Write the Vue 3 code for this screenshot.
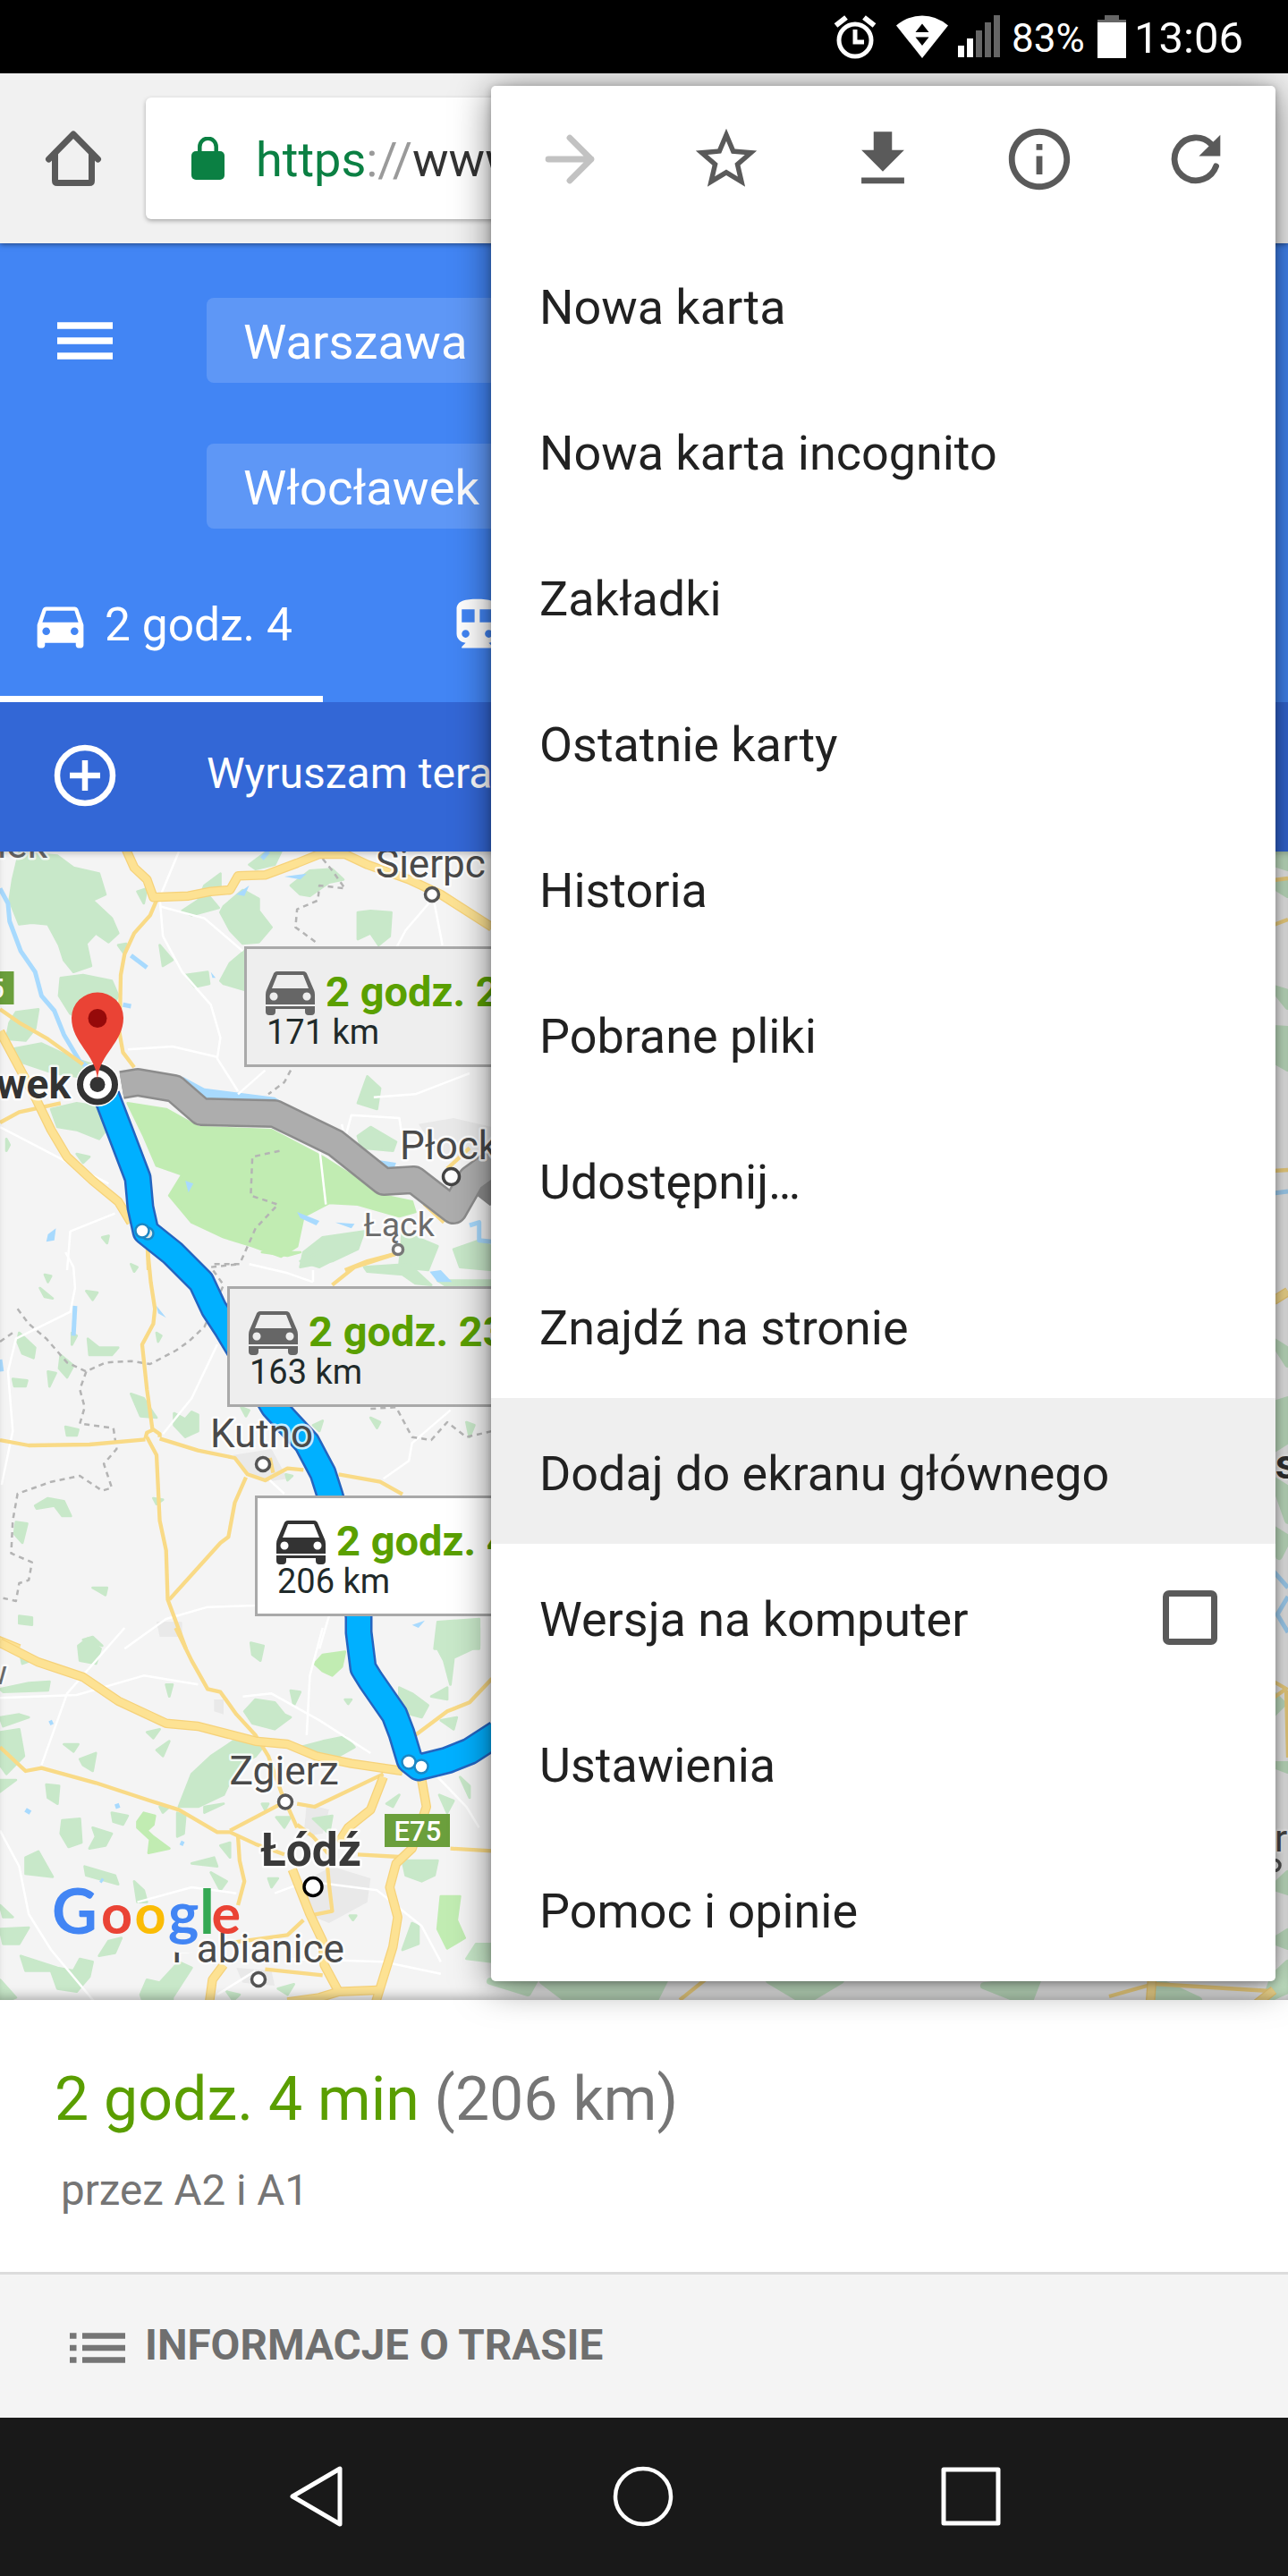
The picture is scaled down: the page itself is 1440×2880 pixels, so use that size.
<template>
  <div class="screen">
    <!-- Status bar -->
    <div class="status-bar">
      <svg class="alarm" viewBox="0 0 48 50" width="48" height="50">
        <circle cx="24" cy="29" r="18" fill="none" stroke="#fff" stroke-width="5" />
        <path d="M24 17v14h10" fill="none" stroke="#fff" stroke-width="5" />
        <path d="M2.500 12.500L14 3.500M45.500 12.500L34 3.500" stroke="#fff" stroke-width="6" />
      </svg>
      <svg class="wifi" viewBox="0 0 58 48" width="58" height="48">
        <path d="M0 11.500Q13 .5 29 .5T58 11.500L29 48z" fill="#fff" />
        <path d="M21.500 19L29 9.500 36.500 19zM21.500 24.500L29 34 36.500 24.500z" fill="#000" />
      </svg>
      <div class="signal">
        <span
          v-for="(bar, index) in signalBars"
          :key="index"
          :class="{ on: bar.on }"
          :style="{ height: bar.height + 'px' }"
        ></span>
      </div>
      <span class="percent">83%</span>
      <svg class="battery" viewBox="0 0 32 48" width="32" height="48">
        <path d="M8 0h16v5h8v4H0V5h8z" fill="#666" />
        <path d="M0 8h32v40H0z" fill="#fff" />
      </svg>
      <span class="clock">13:06</span>
    </div>

    <!-- Browser toolbar -->
    <div class="toolbar">
      <svg class="home" viewBox="0 0 64 64" width="64" height="64">
        <g fill="none" stroke="#5a5a5a" stroke-width="7" stroke-linecap="round" stroke-linejoin="round">
          <path d="M4.500 33L32 5l27.500 28" />
          <path d="M11.500 27v30q0 2.500 2.500 2.500h36q2.500 0 2.500-2.500V27" />
        </g>
      </svg>
      <div class="omnibox">
        <svg viewBox="0 0 37 48" width="37" height="48">
          <rect y="16" width="37" height="32" rx="5" fill="#0b8043" />
          <path d="M9.300 18v-7a9.200 9.200 0 0 1 18.400 0v7" fill="none" stroke="#0b8043" stroke-width="4.500" />
        </svg>
        <div class="url"><span class="scheme">https</span><span class="sep">://</span>www.google.pl</div>
      </div>
    </div>

    <!-- Directions header -->
    <div class="directions">
      <div class="waypoint">
        <svg class="burger" viewBox="0 0 62 42" width="62" height="42">
          <path d="M0 4h62M0 21h62M0 38h62" stroke="#fff" stroke-width="7.500" />
        </svg>
        <div class="field">Warszawa</div>
      </div>
      <div class="waypoint">
        <div class="field">Włocławek</div>
      </div>
      <div class="modes">
        <div class="mode active">
          <svg viewBox="0 0 24 24" width="69" height="69"><path :d="carPath" fill="#fff" /></svg>
          <span>2 godz. 4</span>
        </div>
        <div class="mode transit">
          <svg viewBox="0 0 24 24" width="69" height="69"><path :d="trainPath" fill="#fff" /></svg>
        </div>
      </div>
    </div>
    <div class="departure">
      <svg viewBox="0 0 70 70" width="70" height="70">
        <circle cx="35" cy="35" r="31" fill="none" stroke="#fff" stroke-width="6.500" />
        <path d="M35 18v34M18 35h34" stroke="#fff" stroke-width="6.500" />
      </svg>
      <span>Wyruszam teraz</span>
    </div>

    <!-- Map -->
    <div class="map">
      <svg viewBox="0 952 1440 1284" width="1440" height="1284">
        <g v-for="(tile, index) in tiles" :key="index" :transform="tile.transform">
          <polygon v-for="p in tile.urban" :key="p" :points="p" class="urban" />
          <polygon v-for="p in tile.woods" :key="p" :points="p" class="woods" />
          <polygon v-for="p in tile.parks" :key="p" :points="p" class="park" />
          <polygon v-for="p in tile.lakes" :key="p" :points="p" class="lake" />
          <polyline v-for="p in tile.rivers" :key="p" :points="p" class="river" />
          <polyline v-for="p in tile.streets" :key="p" :points="p" class="street" />
          <polyline v-for="p in tile.borders" :key="p" :points="p" class="border" />
          <polyline v-for="p in tile.minor" :key="p" :points="p" class="minor" />
          <polyline v-for="p in tile.major" :key="p" :points="p" class="major-edge" />
          <polyline v-for="p in tile.major" :key="p + 'in'" :points="p" class="major" />
        </g>

        <!-- Alternative and selected routes -->
        <g class="route">
          <polyline :points="altRoute" stroke="#8c8c8c" stroke-width="32" />
          <polyline points="529,1317 556,1338" stroke="#8c8c8c" stroke-width="26" />
          <polyline :points="altRoute" stroke="#adadad" stroke-width="27" />
          <polyline :points="mainRoute" stroke="#2465c0" stroke-width="31" />
          <polyline :points="mainRoute" stroke="#00b0ff" stroke-width="26" />
        </g>
        <g fill="#fff" stroke="#1b87c5" stroke-width="2.500">
          <circle cx="165" cy="1379" r="6.500" fill="#dfe8e8" />
          <circle cx="159" cy="1376" r="7.500" />
          <circle cx="471" cy="1975" r="7.500" />
          <circle cx="457" cy="1970" r="7.500" />
        </g>

        <!-- Place names -->
        <template v-for="place in places" :key="place.name">
          <text
            :x="place.x"
            :y="place.y"
            :font-size="place.size"
            :font-weight="place.weight || 400"
            :text-anchor="place.anchor || 'start'"
            :fill="place.color || '#4a4a4a'"
            class="place"
          >{{ place.name }}</text>
          <circle
            v-if="place.dot"
            :cx="place.dot[0]"
            :cy="place.dot[1]"
            :r="place.dot[2]"
            :stroke="place.dot[3] || '#555'"
            fill="#fff"
            stroke-width="3.500"
          />
        </template>
        <g class="shield">
          <rect x="430" y="2028" width="73" height="37" />
          <text x="467" y="2058" text-anchor="middle">E75</text>
          <rect x="-50" y="1086" width="65.500" height="37" />
          <text x="5" y="1116" text-anchor="end">75</text>
        </g>

        <!-- Destination -->
        <circle cx="109" cy="1212.500" r="24.500" fill="#fff" />
        <circle cx="109" cy="1212.500" r="19.500" fill="#fff" stroke="#333" stroke-width="7" />
        <circle cx="109" cy="1212.500" r="8.500" fill="#333" />
        <path d="M109 1207C107 1178 80 1166 80 1138a29 28.500 0 0 1 58 0C138 1166 111 1178 109 1207z" fill="#ea4335" />
        <circle cx="109" cy="1138.500" r="10.500" fill="#960a0a" />

        <!-- Google logo -->
        <rect x="188" y="2156" width="34" height="27" rx="10" fill="#f4f4f4" />
        <text class="logo" y="2162">
          <tspan
            v-for="(letter, index) in logo"
            :key="index"
            :x="letter.x"
            :fill="letter.color"
            :font-size="letter.size"
          >{{ letter.char }}</tspan>
        </text>
      </svg>

      <div
        v-for="callout in callouts"
        :key="callout.distance"
        class="callout"
        :class="{ selected: callout.selected }"
        :style="{ left: callout.x + 'px', top: callout.y + 'px' }"
      >
        <div class="callout-top">
          <svg viewBox="0 0 55 49" width="55" height="49">
            <path
              fill-rule="evenodd"
              d="M8.500 3.500Q9.500 0 13 0h29q3.500 0 4.500 3.500L54 21q1 2 1 5v11H0V26q0-3 1-5zM13 4L7 19h41L42 4zM9 23.500a4.500 4.500 0 1 0 .01 0zM46 23.500a4.500 4.500 0 1 0 .01 0zM0 39h55v6q0 4-4 4h-3q-4 0-4-4v-3H11v3q0 4-4 4H4q-4 0-4-4z"
            />
          </svg>
          <span class="duration">{{ callout.duration }}</span>
        </div>
        <div class="distance">{{ callout.distance }}</div>
      </div>
    </div>

    <!-- Route summary -->
    <div class="summary">
      <div class="headline"><span class="time">2 godz. 4 min</span> (206 km)</div>
      <div class="via">przez A2 i A1</div>
    </div>
    <div class="details">
      <svg viewBox="0 0 62 36" width="62" height="36">
        <path
          d="M0 4.500h7.500M0 18h7.500M0 31.500h7.500M14 4.500h48M14 18h48M14 31.500h48"
          stroke="#757575"
          stroke-width="6.500"
        />
      </svg>
      <span>INFORMACJE O TRASIE</span>
    </div>

    <!-- System navigation -->
    <div class="nav-bar">
      <svg viewBox="0 0 366 80" width="366" height="80">
        <path d="M210 9v62l-53-31z" fill="none" stroke="#fff" stroke-width="5" stroke-linejoin="round" />
      </svg>
      <svg viewBox="0 0 366 80" width="366" height="80">
        <circle cx="183" cy="40" r="31" fill="none" stroke="#fff" stroke-width="4.500" />
      </svg>
      <svg viewBox="0 0 366 80" width="366" height="80">
        <rect x="153" y="10" width="61" height="60" fill="none" stroke="#fff" stroke-width="5" stroke-linejoin="round" />
      </svg>
    </div>

    <!-- Browser menu -->
    <div class="menu">
      <div class="menu-actions">
        <div class="action">
          <svg viewBox="0 0 24 24" width="82" height="82">
            <path
              d="M5 12h14M12 5l7 7-7 7"
              fill="none"
              stroke="#c2c2c2"
              stroke-width="2"
              stroke-linecap="round"
              stroke-linejoin="round"
            />
          </svg>
        </div>
        <div v-for="(icon, index) in actionIcons" :key="index" class="action">
          <svg viewBox="0 0 24 24" width="82" height="82"><path :d="icon" fill="#5a5a5a" /></svg>
        </div>
        <div class="action">
          <svg viewBox="0 0 24 24" width="82" height="82">
            <path d="M17 7.050A7 7 0 1 0 18.600 14.300" fill="none" stroke="#5a5a5a" stroke-width="2" stroke-linecap="round" />
            <path d="M20 4v7h-7z" fill="#5a5a5a" />
          </svg>
        </div>
      </div>
      <div
        v-for="item in menuItems"
        :key="item.label"
        class="menu-item"
        :class="{ pressed: item.pressed }"
      >
        <span>{{ item.label }}</span>
        <span v-if="item.checkbox" class="checkbox"></span>
      </div>
    </div>
  </div>
</template>

<script setup>
const signalBars = [
  { height: 13, on: true },
  { height: 21, on: true },
  { height: 30, on: false },
  { height: 39, on: false },
  { height: 47, on: false }
]

const menuItems = [
  { label: 'Nowa karta' },
  { label: 'Nowa karta incognito' },
  { label: 'Zakładki' },
  { label: 'Ostatnie karty' },
  { label: 'Historia' },
  { label: 'Pobrane pliki' },
  { label: 'Udostępnij…' },
  { label: 'Znajdź na stronie' },
  { label: 'Dodaj do ekranu głównego', pressed: true },
  { label: 'Wersja na komputer', checkbox: true },
  { label: 'Ustawienia' },
  { label: 'Pomoc i opinie' }
]

const carPath = 'M18.920 6.010C18.720 5.420 18.160 5 17.500 5h-11c-.66 0-1.210.42-1.420 1.010L3 12v8c0 .55.45 1 1 1h1c.55 0 1-.45 1-1v-1h12v1c0 .55.45 1 1 1h1c.55 0 1-.45 1-1v-8l-2.080-5.990zM6.500 16c-.83 0-1.500-.67-1.500-1.500S5.670 13 6.500 13s1.500.67 1.500 1.500S7.330 16 6.500 16zm11 0c-.83 0-1.500-.67-1.500-1.500s.67-1.500 1.500-1.500 1.500.67 1.500 1.500-.67 1.500-1.500 1.500zM5 11l1.500-4.500h11L19 11H5z'
const trainPath = 'M12 2c-4.420 0-8 .5-8 4v9.500C4 17.430 5.570 19 7.500 19L6 20.500v.5h12v-.5L16.500 19c1.930 0 3.500-1.570 3.500-3.500V6c0-3.500-3.580-4-8-4zM7.500 17c-.83 0-1.500-.67-1.500-1.500S6.670 14 7.500 14s1.500.67 1.500 1.500S8.330 17 7.500 17zm3.500-6H6V6h5v5zm5.500 6c-.83 0-1.500-.67-1.500-1.500s.67-1.500 1.500-1.500 1.500.67 1.500 1.500-.67 1.500-1.500 1.500zm1.500-6h-5V6h5v5z'

// star, download, info
const actionIcons = [
  'M22 9.240l-7.190-.62L12 2 9.190 8.630 2 9.240l5.460 4.730L5.820 21 12 17.270 18.180 21l-1.630-7.030L22 9.240zM12 15.400l-3.760 2.270 1-4.280-3.320-2.880 4.380-.38L12 6.100l1.710 4.040 4.380.38-3.320 2.880 1 4.280L12 15.400z',
  'M19 9h-4V3H9v6H5l7 7 7-7zM5 18v2h14v-2H5z',
  'M11 17h2v-6h-2v6zm1-15C6.480 2 2 6.480 2 12s4.480 10 10 10 10-4.480 10-10S17.520 2 12 2zm0 18c-4.410 0-8-3.590-8-8s3.590-8 8-8 8 3.590 8 8-3.590 8-8 8zM11 9h2V7h-2v2z'
]

const callouts = [
  { x: 273, y: 1058 - 952, duration: '2 godz. 2', distance: '171 km' },
  { x: 254, y: 1438 - 952, duration: '2 godz. 23', distance: '163 km' },
  { x: 285, y: 1672 - 952, duration: '2 godz. 4', distance: '206 km', selected: true }
]

const logo = [
  { char: 'G', x: 58, color: '#4285f4', size: 70 },
  { char: 'o', x: 113, color: '#ea4335', size: 61 },
  { char: 'o', x: 150.5, color: '#fbbc05', size: 61 },
  { char: 'g', x: 188, color: '#4285f4', size: 65 },
  { char: 'l', x: 223, color: '#34a853', size: 68 },
  { char: 'e', x: 236.5, color: '#ea4335', size: 61 }
]

const places = [
  { name: 'Lubraniek', x: 53, y: 959, size: 44, anchor: 'end', color: '#666' },
  { name: 'Sierpc', x: 420, y: 980.5, size: 44, dot: [483, 1000, 7.5] },
  { name: 'Włocławek', x: 79, y: 1227.5, size: 46, weight: 700, anchor: 'end', color: '#333' },
  { name: 'Płock', x: 447, y: 1295.5, size: 44, dot: [504.5, 1315.5, 9, '#444'] },
  { name: 'Łąck', x: 406.5, y: 1381.5, size: 37.5, color: '#6b6b6b', dot: [445, 1397, 5.5, '#777'] },
  { name: 'Kutno', x: 235, y: 1618, size: 44, dot: [294, 1637, 7.5] },
  { name: 'w', x: 8, y: 1883, size: 37, anchor: 'end', color: '#6b6b6b' },
  { name: 'Zgierz', x: 256.5, y: 1995, size: 44.3, dot: [319, 2014.5, 7.5] },
  { name: 'Łódź', x: 291, y: 2085.5, size: 51.5, weight: 700, color: '#3a3a3a', dot: [350, 2109.5, 10, '#000'] },
  { name: 'Pabianice', x: 192, y: 2194, size: 44.2, dot: [289, 2213, 7.5] },
  { name: 's', x: 1426, y: 1652.5, size: 46, weight: 700, color: '#333' },
  { name: 'r', x: 1425, y: 2069.5, size: 42, dot: [1425, 2085.5, 6] }
]

const altRoute = '136,1213 154,1210 195,1217 225,1243 307,1245 375,1278 429,1321 463,1319 507,1353 527,1318 545,1305 570,1303'
const mainRoute = '119,1225 154,1317 157,1350 163,1377 193,1401 225,1433 239,1463 254,1486 306,1573 343,1613 361,1647 369,1672 388,1740 401,1807 401,1825 406,1865 414,1878 441,1917 449,1938 458,1968 468,1976 500,1968 525,1958 556,1938'

const tiles = [
  {
    transform: 'translate(0 940) scale(.35714 .33333)',
    urban: ['1310,950 1420,930 1540,960 1540,1060 1380,1060'],
    woods: [
      '60,40 180,50 230,90 310,110 330,180 290,200 350,260 370,310 340,340 300,310 270,345 285,420 230,440 200,400 185,350 150,280 100,275 60,280 30,200 40,130',
      '190,460 260,450 350,470 370,520 340,580 260,600 220,580 185,520',
      '50,575 120,565 110,630 80,670 20,665 30,610',
      '30,700 130,680 230,730 290,750 300,800 170,780 60,740',
      '160,900 240,880 300,890 340,960 310,1000 240,970 180,960',
      '640,150 690,110 690,165 650,180 685,225 600,250 570,235 620,200',
      '700,220 760,165 810,195 810,235 850,290 810,340 760,345 720,300 690,240',
      '910,150 970,100 1040,95 1075,130 1030,140 970,185 940,180',
      '1120,240 1160,235 1225,240 1220,320 1185,350 1160,310 1120,330',
      '580,450 650,440 655,480 610,490',
      '690,470 720,410 765,370 765,500 700,480',
      '1120,880 1150,790 1190,830 1180,900',
      '1120,990 1160,960 1240,1010 1230,1040 1130,1030',
      '500,350 540,400 510,420',
      '1010,1330 1140,1310 1120,1370 1040,1410 940,1430 950,1380',
      '1260,1310 1370,1360 1340,1440 1250,1430',
      '1420,1370 1500,1340 1540,1360 1540,1440 1440,1430',
      '240,1050 280,1060 260,1080', '320,1330 340,1325 335,1350', '430,170 460,160 450,210',
      '780,80 830,40 880,36 860,80 800,95', '370,350 395,345 390,380', '20,1000 30,1020 20,1040'
    ],
    parks: [
      '400,880 520,900 620,960 850,970 1010,1060 1200,1190 1290,1210 1300,1245 1250,1260 1120,1220 1030,1215 950,1260 930,1360 880,1395 790,1360 700,1330 600,1280 530,1190 570,1120 490,1090 450,990'
    ],
    lakes: [
      '570,790 640,830 860,860 960,930 850,890 640,870',
      '1180,1070 1240,1080 1230,1110', '740,180 780,150 765,185', '580,1140 605,1150 590,1180',
      '930,1245 1000,1275 990,1290 940,1265', '1050,1280 1110,1285 1100,1300', '150,1320 175,1300 170,1340 145,1345',
      '890,120 960,110 940,130', '660,440 675,460 665,460'
    ],
    rivers: [
      '0,160 25,210 30,270 65,370 110,440 130,520 170,570 200,650 250,740 330,800',
      '410,385 460,425', '385,550 410,555', '1470,1290 1500,1280 1500,1340 1540,1345', '820,60 840,36'
    ],
    streets: [
      '560,36 500,190 510,320 570,440 660,550 690,660 680,730 745,840', '500,220 640,260 760,370',
      '400,700 540,690 680,725', '1350,200 1270,300 1240,360', '1360,210 1385,350', '0,960 340,1150',
      '1000,1030 1020,1220', '360,1250 220,1310 210,1440', '1070,950 1080,1000 1100,920 1250,930 1260,1000',
      '1170,860 1300,850 1470,780', '745,850 830,770'
    ],
    borders: [
      '1010,60 1040,100 1080,160 1000,150 995,200 930,230 925,290 995,345', '910,770 890,810 840,850',
      '875,1040 790,1060 785,1190 870,1220 800,1300 750,1420 660,1420'
    ],
    minor: [
      '490,200 470,250 420,310 390,380 378,450 376,560 370,620 385,710 420,760',
      '0,565 60,610 150,665 260,750', '0,945 60,910 190,880', '460,1330 465,1440',
      '1080,1440 1150,1410 1240,1385', '1340,1200 1330,1220 1390,1280', '1400,1100 1470,1030'
    ],
    major: [
      '395,30 420,90 460,130 480,190 590,185 660,170 720,165 745,118 830,115 930,75 1000,45 1080,45 1150,80 1280,130 1380,180 1540,290',
      '0,640 40,720 110,860 160,970 210,1060 290,1140 370,1210 410,1280'
    ]
  },
  {
    transform: 'translate(0 1400) scale(.35714 .33333)',
    urban: ['730,680 850,660 900,760 830,770 780,740', '490,1240 570,1240 570,1290 500,1290'],
    woods: [
      '60,270 110,320 105,355 70,340 55,300', '190,345 230,380 210,420 185,390', '275,290 310,320 370,320 350,345 280,345',
      '545,540 580,560 600,535 620,545 620,600 580,620 545,580', '410,475 450,490 480,540 490,555 440,550',
      '110,850 150,825 200,835 222,885 195,885 170,850 115,860', '50,905 85,910 70,975 45,945', '290,1125 335,1125 330,1150',
      '60,1220 100,1225 100,1250 60,1245', '205,585 245,595 240,615 210,615', '1370,1240 1500,1230 1500,1330 1360,1330',
      '270,130 305,135 290,160', '940,30 1000,0 1090,0 1000,50', '1140,50 1280,40 1350,110 1300,105 1260,75 1150,65',
      '1370,95 1540,95 1540,115 1400,115', '125,120 165,155 140,150', '40,425 85,430 80,450 45,450', '150,400 175,405 155,450',
      '1160,555 1190,570 1180,590', '1460,570 1485,580 1470,620', '260,1300 290,1290 320,1320', '410,40 430,50 420,65',
      '140,75 160,80 150,100', '490,270 505,280 495,300', '755,520 780,530 770,550', '980,580 1010,565 1000,600',
      '225,270 240,280 225,310', '480,825 510,830 490,845', '1480,0 1500,0 1515,40', '895,745 915,750 900,765'
    ],
    parks: ['820,0 940,0 900,12'],
    lakes: ['1345,65 1380,60 1415,100 1370,100', '490,180 520,220 495,205', '1290,1250 1330,1235 1310,1260'],
    rivers: ['235,180 230,280', '0,360 5,400'],
    streets: [
      '205,0 230,50 235,120 220,200 50,290 25,400 40,600 5,780', '680,310 640,400 600,490 510,610',
      '1410,530 1290,640 1280,700 1200,760', '390,1330 520,1230 650,1190 800,1185', '1030,1220 1000,1330',
      '780,40 900,70 980,100', '980,100 980,60', '840,760 890,810'
    ],
    borders: [
      '55,190 90,240 145,290 210,370 270,400 330,370 410,365 470,375 550,330 590,300 640,250 700,110 660,50 750,40',
      '270,400 250,460 265,520 250,575 355,590 365,660 325,710 350,790 320,800 250,750 160,770 55,810 40,900 35,1010 100,1040 90,1100 60,1110 50,1170 10,1160',
      '1160,525 1240,520 1290,620 1350,630 1400,570 1460,620 1540,600', '0,300 40,270'
    ],
    minor: [
      '463,0 472,100 485,190 480,240 445,310 460,460 478,600', '455,625 460,605 480,595 500,610 500,620',
      '460,620 490,680 500,900 520,1000 525,1165 582,1330', '0,630 90,648 280,645 455,628',
      '500,625 620,665 735,690 775,745 830,765 900,725 950,730', '1060,745 1190,770 1260,812',
      '770,755 735,840 715,955 690,975 530,1165', '1040,110 1110,50 1240,5', '845,690 855,740'
    ],
    major: ['-10,1300 60,1330']
  },
  {
    transform: 'translate(0 1820) scale(.35714 .33333)',
    urban: ['930,860 1040,800 1160,840 1150,920 1030,990 960,960', '740,1140 850,1150 860,1200 760,1190', '670,240 700,240 700,290 670,280', '960,590 1030,610 1010,690 950,700'],
    woods: [
      '245,60 275,35 315,70 300,120 250,110', '785,50 825,60 815,110 790,90', '0,350 60,340 75,430 20,490 0,460',
      '0,205 90,185 155,180 150,210 10,215', '765,280 800,240 860,250 890,290 910,300 860,340 790,320', '460,350 500,340 480,370',
      '490,410 530,380 510,430', '560,600 600,490 660,430 730,380 830,390 800,430 740,470 700,560 620,600', '940,400 1010,380 1080,365 1110,400 1060,430 980,420',
      '1370,0 1500,0 1500,60 1420,100 1410,190 1390,110 1365,60', '1250,200 1290,220 1340,260 1320,300 1250,280',
      '195,645 250,640 255,720 215,735 190,690', '290,670 350,690 330,730 280,740 300,700', '145,525 185,530 180,590 150,570',
      '80,770 120,750 165,835 80,825', '265,800 360,830 370,860 270,830', '350,620 400,630 385,660 355,650',
      '1260,780 1370,780 1360,830 1320,850 1270,830', '1460,1110 1490,1060 1540,1060 1540,1120', '1260,1080 1290,990 1310,1000 1310,1060',
      '65,1100 180,1140 230,1150 250,1110 290,1120 280,1170 240,1220 180,1210 160,1150 80,1150', '0,1010 90,1005 60,1060 10,1060', '310,1100 340,1050 380,1040 360,1090',
      '440,1230 460,1180 500,1190 560,1120 600,1140 540,1240 540,1260 450,1260', '600,790 670,770 680,800', '555,620 580,630 575,690 555,700',
      '420,850 450,880 460,920 430,920', '870,1210 920,1195 900,1230', '1375,560 1420,580 1400,620', '200,390 245,390 230,415', '865,635 910,635 890,670',
      '980,640 1040,630 1030,690', '0,1180 50,1240 0,1260', '910,210 940,215 920,260', '1350,230 1400,200 1400,240', '1380,310 1430,300 1420,340',
      '520,190 540,190 530,230', '0,300 60,290 90,300 10,330', '0,510 50,510 0,550', '1440,500 1470,530 1470,570', '65,95 110,105 70,120',
      '840,840 870,840 850,870', '500,600 530,600 510,620', '250,440 300,420 290,480 260,460', '690,730 720,720 720,770', '660,820 710,850 690,880',
      '0,930 40,970 10,970', '1210,590 1250,560 1230,600', '710,1220 750,1230 730,1250', '820,590 840,590 830,610', '1080,240 1100,240 1090,255', '1095,965 1115,965 1105,980', '640,600 700,590 640,620'
    ],
    parks: [
      '985,120 1010,90 1080,80 1070,130 1040,160 1010,145', '430,650 450,620 485,630 480,660 460,680 480,700 530,740 465,755 470,710 430,670',
      '1380,900 1440,900 1430,980 1455,1040 1400,1075 1370,1010'
    ],
    lakes: [],
    rivers: ['365,590 370,605', '565,720 575,725', '315,845 322,850', '155,320 165,315', '80,610 95,620'],
    streets: [
      '390,0 210,220 130,460', '0,235 240,225 450,160 620,190', '1010,0 970,160 960,360', '760,230 850,220 1000,310 1160,420', '0,680 60,800 90,960 160,1080 300,1260',
      '430,920 600,870 740,890', '860,890 960,850 1180,880 1320,1000 1380,1120', '1370,500 1460,600 1500,670', '900,1110 1200,1120 1380,1160', '680,1230 800,1150'
    ],
    borders: [],
    minor: [
      '550,0 600,110 650,205 690,215 740,290 800,360 840,430 880,550 930,670', '0,400 80,480 130,470 300,520 470,580 560,610 680,685 720,685 800,725 890,760',
      '720,680 880,590', '930,590 985,600 1200,490', '745,700 750,780 765,850 745,930', '1120,760 1250,768', '1410,740 1540,748',
      '1300,360 1400,280 1470,250 1540,170', '730,1055 900,1030 950,980', '830,1145 1010,1165', '1025,800 1030,860 1040,950 970,965', '930,660 980,700 1030,760'
    ],
    major: [
      '0,50 120,115 260,165 370,245 520,320 620,330 800,380 900,390 990,430 1100,455 1260,480',
      '1320,510 1335,600 1290,740 1240,790 1220,870 1245,970 1230,1070 1175,1260', '1200,500 1160,610 1090,670 1060,720',
      '915,810 970,960 1010,1050 1015,1130 1060,1220 1180,1215', '900,1255 1000,1240 1060,1220', '700,1130 665,1180 655,1260'
    ]
  },
  // strips visible right of and below the menu
  {
    transform: '',
    urban: [],
    woods: [
      '1424,950 1440,952 1440,970 1424,965', '1424,990 1440,985 1440,1000', '1424,1105 1440,1110 1440,1125', '1424,1150 1440,1151 1440,1194 1424,1185',
      '1424,1500 1440,1510 1440,1525', '1424,1570 1440,1565 1440,1610 1424,1620', '1424,1655 1440,1665 1440,1700', '1424,1710 1440,1720 1430,1740',
      '1424,1895 1434,1905 1424,1915', '1424,1973 1440,1973 1440,1979', '1424,2110 1440,2095 1440,2115', '1424,2170 1440,2160 1440,2176',
      '1424,2210 1440,2195 1440,2225 1415,2236', '607,2215 745,2210 730,2240 640,2240', '548,2215 600,2210 590,2228', '860,2214 940,2214 900,2238', '1100,2220 1160,2214 1150,2240', '1295,2215 1340,2236 1295,2236'
    ],
    parks: [],
    lakes: [],
    rivers: ['1424,1757 1440,1775', '1440,1785 1428,1805 1440,1825', '1424,1334 1440,1332'],
    streets: [],
    borders: [],
    minor: ['1424,984 1440,982', '1424,1034 1440,1028', '1424,1309 1440,1308', '1424,1880 1438,1888 1424,1898', '1438,1890 1440,1965', '1240,2232 1290,2218 1420,2226', '760,2236 790,2212'],
    major: ['1424,1454 1440,1444', '1288,2212 1286,2240', '1424,2225 1405,2240']
  }
]
</script>

<style>
body {
  background: #fff;
}
</style>

<style scoped>
.screen {
  position: relative;
  width: 1440px;
  height: 2880px;
  overflow: hidden;
  font-family: Roboto, "Liberation Sans", sans-serif;
  background: #fff;
}

.screen * {
  box-sizing: border-box;
}

.screen svg {
  display: block;
  flex: none;
}

/* Status bar */
.status-bar {
  position: relative;
  z-index: 3;
  display: flex;
  justify-content: flex-end;
  height: 82px;
  padding: 16px 51px 0 0;
  background: #000;
  color: #fff;
}

.wifi {
  margin: 1px 0 0 22px;
}

.signal {
  display: flex;
  align-items: flex-end;
  gap: 3px;
  height: 48px;
  margin-left: 11px;
}

.signal span {
  width: 7px;
  background: #666;
}

.signal span.on {
  background: #fff;
}

.percent {
  width: 96px;
  margin-left: 13px;
  font-size: 44px;
  line-height: 54px;
}

.battery {
  margin-top: 1px;
}

.clock {
  width: 121px;
  margin-left: 9px;
  font-size: 49px;
  line-height: 54px;
}

/* Toolbar */
.toolbar {
  position: relative;
  z-index: 1;
  display: flex;
  height: 190px;
  padding: 27px 0 0 50px;
  background: #f1f1f1;
  box-shadow: 0 1px 6px rgba(0, 0, 0, 0.5);
}

.home {
  margin-top: 36px;
}

.omnibox {
  display: flex;
  align-items: center;
  width: 1100px;
  height: 136px;
  margin-left: 49px;
  padding-left: 51px;
  border-radius: 6px;
  background: #fff;
  box-shadow: 0 2px 5px rgba(0, 0, 0, 0.3);
}

.url {
  margin-left: 35px;
  padding-top: 3px;
  font-size: 54px;
  color: #333;
}

.scheme {
  color: #0b8043;
}

.sep {
  color: #9a9a9a;
}

/* Directions */
.directions {
  height: 513px;
  padding-top: 61px;
  background: #4285f4;
  color: #fff;
}

.waypoint {
  display: flex;
  align-items: center;
  justify-content: flex-end;
  height: 95px;
  margin-bottom: 68px;
}

.burger {
  margin-right: 105px;
}

.field {
  width: 1129px;
  height: 95px;
  margin-right: 80px;
  padding: 4px 0 0 41px;
  border-radius: 8px;
  background: #5e97f6;
  font-size: 54.4px;
  line-height: 92px;
}

.modes {
  display: flex;
  height: 173px;
  margin-top: -47px;
}

.mode {
  display: flex;
  align-items: center;
  width: 361px;
  padding: 6px 0 0 33px;
  border-bottom: 7px solid transparent;
  font-size: 51.5px;
}

.mode.active {
  border-color: #fff;
}

.mode span {
  margin-left: 15px;
  white-space: nowrap;
}

.mode.transit {
  padding-left: 138px;
}

.departure {
  display: flex;
  align-items: center;
  height: 167px;
  padding: 0 0 4px 60px;
  background: #3367d6;
  color: #fff;
  font-size: 48px;
}

.departure span {
  margin-left: 101px;
  padding-bottom: 5px;
}

/* Map */
.map {
  position: relative;
  height: 1284px;
  overflow: hidden;
  background: #f4f4f4;
}

.map::after {
  content: "";
  position: absolute;
  inset: 0;
  box-shadow: inset 0 8px 10px -8px rgba(0, 0, 0, 0.35), inset 0 -10px 14px -8px rgba(0, 0, 0, 0.35);
}

.map polyline {
  fill: none;
  stroke-linejoin: round;
  vector-effect: non-scaling-stroke;
}

.urban {
  fill: #e9e9e9;
}

.woods {
  fill: #c8e8c9;
  stroke: #c8e8c9;
  stroke-width: 8;
  stroke-linejoin: round;
}

.park {
  fill: #c1ecb2;
  stroke: #c1ecb2;
  stroke-width: 8;
  stroke-linejoin: round;
}

.lake {
  fill: #a8dafe;
}

.river {
  stroke: #a8dafe;
  stroke-width: 5;
}

.street {
  stroke: #fff;
  stroke-width: 2.5;
}

.border {
  stroke: #b4b4b4;
  stroke-width: 2.5;
  stroke-dasharray: 6 5;
}

.minor {
  stroke: #f9da86;
  stroke-width: 4.3;
}

.major-edge {
  stroke: #f6d27a;
  stroke-width: 10.5;
}

.major {
  stroke: #fde293;
  stroke-width: 8;
}

.place {
  stroke: rgba(255, 255, 255, 0.8);
  stroke-width: 5;
  stroke-linejoin: round;
  paint-order: stroke;
}

.shield rect {
  fill: #6b9f3c;
}

.shield text {
  fill: #fff;
  font-size: 31px;
  font-weight: 500;
}

.logo {
  font-family: Lato, sans-serif;
  font-weight: 700;
}

.callout {
  position: absolute;
  width: 400px;
  height: 135px;
  padding: 25px 0 0 21px;
  border: 3px solid #a9a9a9;
  background: #eee;
  color: #1f2a2a;
  fill: #666;
  white-space: nowrap;
}

.callout.selected {
  background: #fff;
  fill: #333;
}

.callout-top {
  display: flex;
  height: 49px;
}

.duration {
  margin-left: 12px;
  color: #5aa000;
  font-size: 47px;
  font-weight: 700;
  line-height: 45px;
}

.distance {
  margin-top: -1px;
  padding-left: 1px;
  font-size: 38px;
  line-height: 40px;
}

/* Summary */
.summary {
  height: 304px;
  padding: 69px 0 0 61px;
  color: #757575;
}

.headline {
  font-size: 68px;
  line-height: 84px;
}

.time {
  color: #5a9e00;
}

.via {
  margin: 32px 0 0 7px;
  font-size: 47.5px;
  line-height: 56px;
}

.details {
  display: flex;
  align-items: center;
  height: 163px;
  padding: 0 0 0 78px;
  border-top: 3px solid #dcdcdc;
  background: #f4f4f4;
  color: #6f6f6f;
  font-size: 47.6px;
  font-weight: 700;
}

.details svg {
  margin-top: 3px;
}

.details span {
  margin-left: 22px;
  padding-bottom: 3px;
}

/* Navigation bar */
.nav-bar {
  display: flex;
  align-items: center;
  justify-content: center;
  height: 177px;
  padding: 0 2px 1px 0;
  background: #191919;
}

/* Menu */
.menu {
  position: absolute;
  z-index: 2;
  top: 96px;
  left: 549px;
  width: 877px;
  border-radius: 5px;
  background: #fff;
  box-shadow: 0 5px 42px rgba(0, 0, 0, 0.5), 0 2px 8px rgba(0, 0, 0, 0.25);
}

.menu-actions {
  display: flex;
  height: 163px;
  padding-right: 2px;
}

.action {
  display: flex;
  flex: 1;
  align-items: center;
  justify-content: center;
}

.menu-item {
  display: flex;
  align-items: center;
  justify-content: space-between;
  height: 163px;
  padding: 6px 65px 0 54px;
  color: #212121;
  font-size: 53.9px;
}

.menu-item.pressed {
  background: #efefef;
}

.checkbox {
  width: 61px;
  height: 61px;
  margin-bottom: 5px;
  border: 7px solid #5a5a5a;
  border-radius: 7px;
}
</style>
